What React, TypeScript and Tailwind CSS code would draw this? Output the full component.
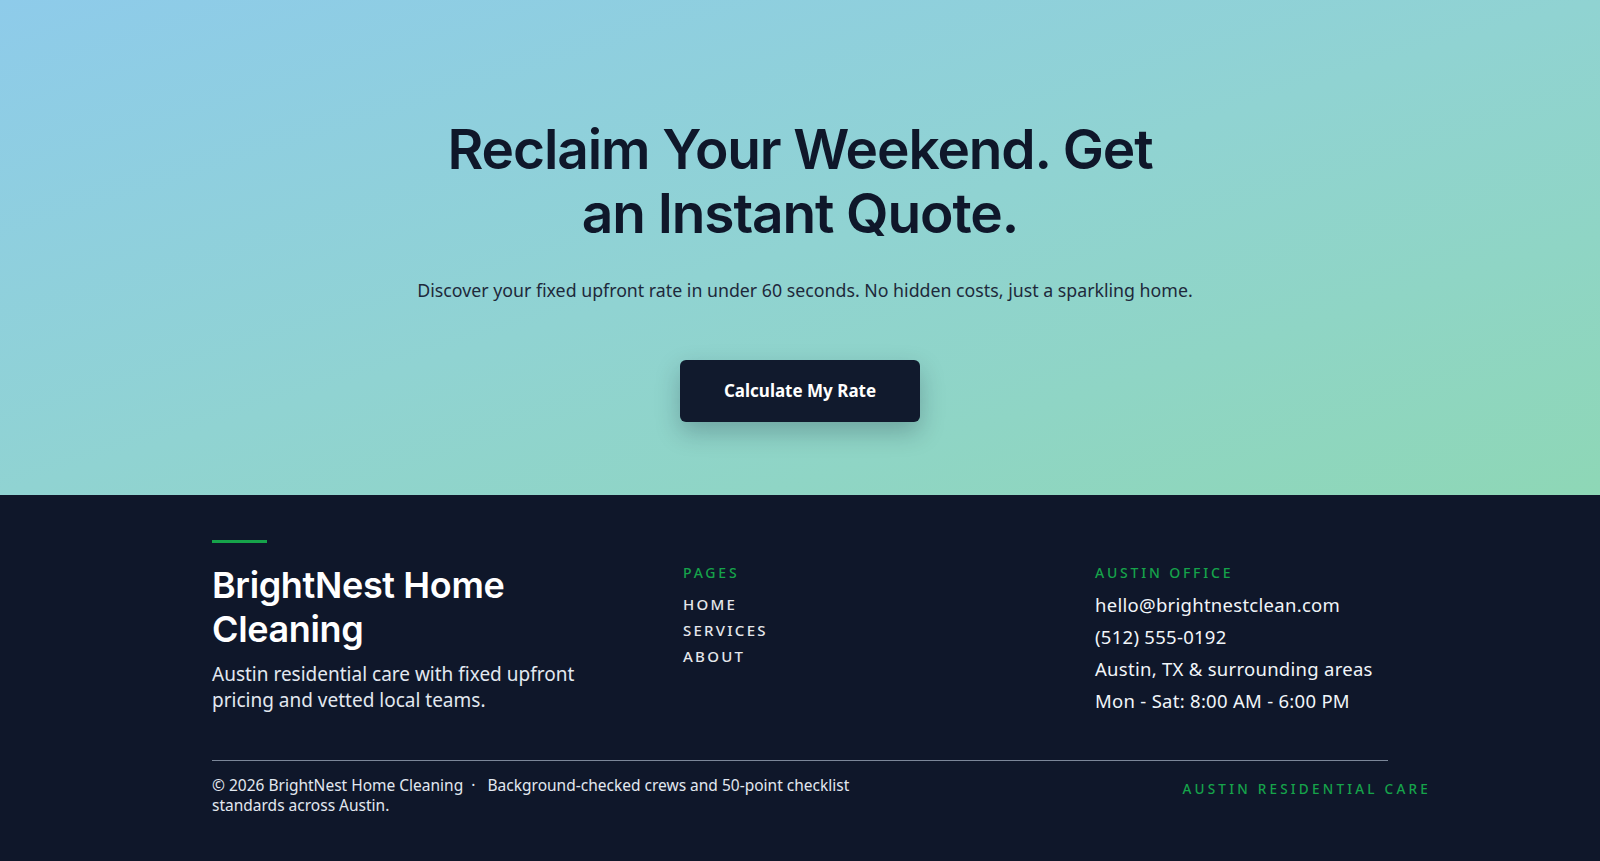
import React from "react";

const heading = { fontFamily: "Inter, 'Noto Sans', sans-serif" };
const body = { fontFamily: "'Noto Sans', 'Open Sans', sans-serif" };

export default function App() {
  return (
    <div className="min-h-screen w-full bg-[#0f172a]" style={body}>
      <section className="h-[495px] w-full bg-gradient-to-br from-[#8ecbea] via-[#90d3d2] to-[#8ed7b6] flex flex-col items-center pt-[117px]">
        <h1
          className="max-w-[760px] text-center text-[55px] leading-[64px] font-semibold tracking-[-0.02em] text-[#0f172a]"
          style={heading}
        >
          Reclaim Your Weekend. Get an Instant Quote.
        </h1>
        <p className="mt-[31px] pl-[10px] text-[17.75px] leading-[28px] text-[#1e293b]">
          Discover your fixed upfront rate in under 60 seconds. No hidden costs, just a sparkling home.
        </p>
        <button className="mt-[56px] h-[62px] w-[240px] rounded-md bg-[#111a2d] text-white text-[17px] font-bold shadow-[0_10px_24px_rgba(15,23,42,0.25)]">
          Calculate My Rate
        </button>
      </section>

      <footer className="w-full bg-[#0f172a] pt-[45px] pb-[56px]">
        <div className="mx-auto w-[1176px]">
          <div className="grid grid-cols-[471px_412px_1fr]">
            <div>
              <div className="h-[3px] w-[55px] bg-[#16a34a]" />
              <h2
                className="mt-[20px] text-[36px] leading-[44px] font-semibold tracking-[-0.01em] text-white"
                style={heading}
              >
                BrightNest Home
                <br />
                Cleaning
              </h2>
              <p className="mt-[10px] max-w-[400px] text-[19px] leading-[26px] text-[#e2e8f0]">
                Austin residential care with fixed upfront pricing and vetted local teams.
              </p>
            </div>
            <div className="pt-[23px]">
              <h3 className="text-[14px] leading-[20px] font-medium tracking-[0.2em] text-[#16a34a]">PAGES</h3>
              <ul className="mt-[11px] flex flex-col gap-[6px] text-[15px] leading-[20px] font-medium tracking-[0.15em] text-[#e5e7eb]">
                <li>HOME</li>
                <li>SERVICES</li>
                <li>ABOUT</li>
              </ul>
            </div>
            <div className="pt-[23px]">
              <h3 className="text-[14px] leading-[20px] font-medium tracking-[0.2em] text-[#16a34a]">AUSTIN OFFICE</h3>
              <ul className="mt-[9px] flex flex-col gap-[6px] text-[18.5px] leading-[26px] tracking-[0.015em] text-[#f1f5f9]">
                <li>hello@brightnestclean.com</li>
                <li>(512) 555-0192</li>
                <li>Austin, TX &amp; surrounding areas</li>
                <li>Mon - Sat: 8:00 AM - 6:00 PM</li>
              </ul>
            </div>
          </div>
          <div className="mt-[46px] h-px w-full bg-[#7c8799]" />
          <div className="mt-[14px] mr-[-43px] flex items-start justify-between">
            <p className="max-w-[660px] text-[15.5px] leading-[20px] text-[#e2e8f0]">
              © 2026 BrightNest Home Cleaning&nbsp;&nbsp;·&nbsp;&nbsp; Background-checked crews and 50-point checklist standards across Austin.
            </p>
            <span className="pt-[4px] text-[13.5px] leading-[20px] font-medium tracking-[0.24em] text-[#16a34a]">
              AUSTIN RESIDENTIAL CARE
            </span>
          </div>
        </div>
      </footer>
    </div>
  );
}
